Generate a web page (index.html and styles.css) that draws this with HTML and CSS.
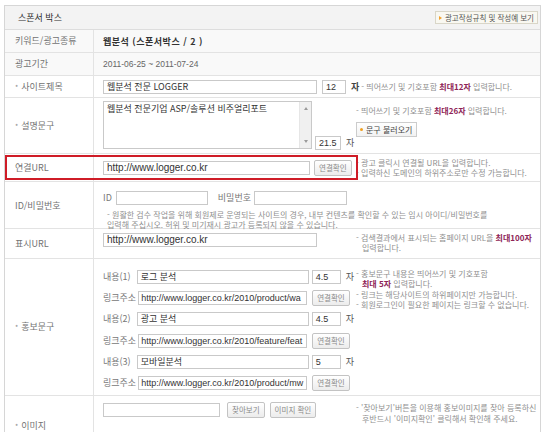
FILE: index.html
```html
<!DOCTYPE html>
<html lang="ko">
<head>
<meta charset="utf-8">
<title>스폰서 박스</title>
<link rel="stylesheet" href="styles.css">
</head>
<body>
<div class="box">
  <div class="head">
    <span class="title">스폰서 박스</span>
    <span class="rule-btn"><i class="tri"></i>광고작성규칙 및 작성예 보기</span>
  </div>

  <div class="row gray h23">
    <div class="lab">키워드/광고종류</div>
    <div class="val"><b class="kind">웹분석 (스폰서박스 / 2 )</b></div>
  </div>

  <div class="row gray h23">
    <div class="lab">광고기간</div>
    <div class="val"><span class="date">2011-06-25 ~ 2011-07-24</span></div>
  </div>

  <div class="row h22">
    <div class="lab"><i class="star">*</i>사이트제목</div>
    <div class="val">
      <span class="inp w214">웹분석 전문 LOGGER</span>
      <span class="inp num">12</span><span class="ja bold">자</span>
      <span class="desc inline">- 띄어쓰기 및 기호포함 <em>최대12자</em> 입력합니다.</span>
    </div>
  </div>

  <div class="row h56">
    <div class="lab"><i class="star">*</i>설명문구</div>
    <div class="val top pt3">
      <div class="fields">
        <div class="ta">
          <div class="ta-text">웹분석 전문기업 ASP/솔루션 비주얼리포트</div>
          <div class="sb"><i class="up"></i><i class="dn"></i></div>
        </div>
        <div class="cnt"><span class="inp num2">21.5</span><span class="ja">자</span></div>
      </div>
      <div class="dcol mt5">
        <p>- 띄어쓰기 및 기호포함 <em>최대26자</em> 입력합니다.</p>
        <span class="btn-load"><i class="dot"></i>문구 불러오기</span>
      </div>
    </div>
  </div>

  <div class="row h28 rel">
    <div class="lab">연결URL</div>
    <div class="val">
      <div class="fields">
        <span class="inp url w207">http://www.logger.co.kr</span>
        <span class="btn ml4">연결확인</span>
      </div>
      <div class="dcol">
        <p>- 광고 클릭시 연결될 URL을 입력합니다.</p>
        <p>- 입력하신 도메인의 하위주소로만 수정 가능합니다.</p>
      </div>
    </div>
    <div class="redbox"></div>
  </div>

  <div class="row h47">
    <div class="lab">ID/비밀번호</div>
    <div class="val col pt8">
      <div class="line">
        <span class="il">ID</span><span class="inp w92"></span>
        <span class="il pw">비밀번호</span><span class="inp w93"></span>
      </div>
      <p class="note">- 원활한 검수 작업을 위해 회원제로 운영되는 사이트의 경우, 내부 컨텐츠를 확인할 수 있는 임시 아이디/비밀번호를<br>입력해 주십시오. 허위 및 미기재시 광고가 등록되지 않을 수 있습니다.</p>
    </div>
  </div>

  <div class="row h30">
    <div class="lab">표시URL</div>
    <div class="val top pt4">
      <div class="fields">
        <span class="inp url w214">http://www.logger.co.kr</span>
      </div>
      <div class="dcol">
        <p>- 검색결과에서 표시되는 홈페이지 URL을 <em>최대100자</em></p>
        <p class="ind">입력합니다.</p>
      </div>
    </div>
  </div>

  <div class="row h137">
    <div class="lab"><i class="star">*</i>홍보문구</div>
    <div class="val top pt10">
      <div class="fields stack">
        <div class="line"><span class="il c">내용(1)</span><span class="inp w172">로그 분석</span><span class="inp num3">4.5</span><span class="ja">자</span></div>
        <div class="line"><span class="il l">링크주소</span><span class="inp link w169">http://www.logger.co.kr/2010/product/wa</span><span class="btn ml5">연결확인</span></div>
        <div class="line"><span class="il c">내용(2)</span><span class="inp w172">광고 분석</span><span class="inp num3">4.5</span><span class="ja">자</span></div>
        <div class="line"><span class="il l">링크주소</span><span class="inp link w169">http://www.logger.co.kr/2010/feature/feat</span><span class="btn ml5">연결확인</span></div>
        <div class="line"><span class="il c">내용(3)</span><span class="inp w172">모바일분석</span><span class="inp num3">5</span><span class="ja">자</span></div>
        <div class="line"><span class="il l">링크주소</span><span class="inp link w169">http://www.logger.co.kr/2010/product/mw</span><span class="btn ml5">연결확인</span></div>
      </div>
      <div class="dcol promo">
        <p>- 홍보문구 내용은 띄어쓰기 및 기호포함</p>
        <p class="ind"><em>최대 5자</em> 입력합니다.</p>
        <p>- 링크는 해당사이트의 하위페이지만 가능합니다.</p>
        <p>- 회원로그인이 필요한 페이지는 링크할 수 없습니다.</p>
      </div>
    </div>
  </div>

  <div class="row h60">
    <div class="lab"><i class="star">*</i>이미지</div>
    <div class="val top pt6">
      <div class="fields">
        <span class="inp w117"></span>
        <span class="btn ml7">찾아보기</span>
        <span class="btn ml5">이미지 확인</span>
      </div>
      <div class="dcol img">
        <p>- '찾아보기'버튼을 이용해 홍보이미지를 찾아 등록하신</p>
        <p class="ind">후반드시 '이미지확인' 클릭해서 확인해 주세요.</p>
      </div>
    </div>
  </div>
</div>
</body>
</html>
```

FILE: styles.css
```css
* { box-sizing: border-box; }
html, body { margin: 0; padding: 0; background: #fff; }
body {
  font-family: "Noto Sans CJK KR", "Noto Sans", sans-serif;
  font-size: 9px;
  color: #6f6f6f;
  overflow: hidden;
}
p { margin: 0; }
em { font-style: normal; font-weight: bold; color: #8e2456; }
i { font-style: normal; }

.box {
  width: 537px;
  margin: 5px 0 0 4px;
  border: 1px solid #d6d6d6;
  border-bottom: none;
}

.head {
  height: 24px;
  background: #f3f3f3;
  border-bottom: 1px solid #dddddd;
  display: flex;
  align-items: center;
  justify-content: space-between;
  padding: 0 2px 0 13px;
}
.title { color: #2e2e2e; font-size: 9px; line-height: 12px; }
.rule-btn {
  height: 13px;
  display: flex;
  align-items: center;
  padding: 0 3px 0 3px;
  border: 1px solid #d9d6c8;
  background: #f9f8f1;
  color: #555;
  font-size: 7.5px;
  line-height: 11px;
}
.tri {
  width: 0; height: 0;
  border-left: 3px solid #f2a12c;
  border-top: 2px solid transparent;
  border-bottom: 2px solid transparent;
  margin-right: 3px;
}

.row {
  display: grid;
  grid-template-columns: 89px 1fr;
  border-bottom: 1px solid #e3e3e3;
}
.row.gray { background: #f9f9f9; }
.row.rel { position: relative; }
.h22 { height: 22px; }
.h23 { height: 23px; }
.h28 { height: 28px; }
.h30 { height: 30px; }
.h47 { height: 47px; }
.h56 { height: 56px; }
.h60 { height: 60px; }
.h137 { height: 137px; }

.lab {
  border-right: 1px solid #e3e3e3;
  display: flex;
  align-items: center;
  padding-left: 10px;
  color: #727272;
  font-size: 9px;
  line-height: 12px;
  white-space: nowrap;
}
.star { font-size: 7px; color: #8a8a8a; margin-right: 3px; }

.val {
  padding-left: 9px;
  display: flex;
  align-items: center;
  min-width: 0;
}
.val.top { align-items: flex-start; }
.val.col { flex-direction: column; align-items: flex-start; }
.pt3 { padding-top: 3px; }
.pt4 { padding-top: 4px; }
.pt6 { padding-top: 6px; }
.pt8 { padding-top: 8px; }
.pt10 { padding-top: 10px; }

.kind { color: #333; font-size: 9px; letter-spacing: 0.5px; }
.date { font-family: "Liberation Sans", Arial, sans-serif; font-size: 8.5px; color: #666; }

.inp {
  display: inline-block;
  height: 14px;
  border: 1px solid #c9c9c9;
  background: #fff;
  padding: 0 3px;
  color: #333;
  font-size: 9px;
  line-height: 12px;
  white-space: nowrap;
  overflow: hidden;
  flex: none;
}
.inp.url { font-family: "Liberation Sans", Arial, sans-serif; font-size: 10px; }
.inp.link { font-family: "Liberation Sans", Arial, sans-serif; font-size: 9px; padding: 0 2px; }
.w92 { width: 92px; }
.w93 { width: 93px; }
.w117 { width: 117px; }
.w169 { width: 169px; }
.w172 { width: 172px; }
.w207 { width: 207px; }
.w214 { width: 214px; }
.num { width: 24px; margin-left: 5px; font-family: "Liberation Sans", Arial, sans-serif; }
.num2 { width: 26px; margin-left: 3px; font-family: "Liberation Sans", Arial, sans-serif; }
.num3 { width: 29px; margin-left: 3px; font-family: "Liberation Sans", Arial, sans-serif; }
.ja { margin-left: 5px; color: #555; font-size: 9px; line-height: 12px; }
.ja.bold { font-weight: bold; color: #444; }

.desc, .dcol, .note {
  font-size: 8px;
  color: #8f8f8f;
  white-space: nowrap;
}
.desc.inline { margin-left: 2px; line-height: 10px; }

.fields { width: 253px; flex: none; display: flex; align-items: center; }
.fields.stack { flex-direction: column; align-items: flex-start; gap: 6.4px; }
.dcol { line-height: 10px; }
.dcol.mt5 { margin-top: 5px; }
.dcol.promo { margin-top: 0; line-height: 10.4px; }
.dcol.img { margin-top: 0; line-height: 11px; }
.dcol .ind { padding-left: 6px; }

.ta {
  width: 209px;
  height: 48px;
  border: 1px solid #c9c9c9;
  background: #fff;
  display: flex;
  flex: none;
}
.ta-text {
  flex: 1;
  padding: 1px 3px;
  color: #333;
  font-size: 9px;
  line-height: 12px;
  white-space: nowrap;
  overflow: hidden;
}
.sb {
  width: 12px;
  background: #f0f0f0;
  border-left: 1px solid #e6e6e6;
  display: flex;
  flex-direction: column;
  justify-content: space-between;
  align-items: center;
  padding: 5px 0;
}
.up, .dn { width: 0; height: 0; border-left: 2.5px solid transparent; border-right: 2.5px solid transparent; }
.up { border-bottom: 3px solid #9a9a9a; }
.dn { border-top: 3px solid #9a9a9a; }
.cnt { align-self: flex-end; display: flex; align-items: center; margin-bottom: -1px; }

.btn {
  display: inline-flex;
  align-items: center;
  justify-content: center;
  height: 16px;
  padding: 0 4px;
  border: 1px solid #c3c3c3;
  border-radius: 2px;
  background: linear-gradient(#ffffff, #ececec);
  color: #8a8a8a;
  font-size: 7.5px;
  line-height: 10px;
  white-space: nowrap;
  flex: none;
}
.btn.ml4 { margin-left: 4px; }
.btn.ml5 { margin-left: 5px; }
.btn.ml7 { margin-left: 7px; }

.btn-load {
  display: inline-flex;
  align-items: center;
  margin-top: 6px;
  height: 15px;
  padding: 0 4px 0 3px;
  border: 1px solid #cccccc;
  background: linear-gradient(#ffffff, #f2f2f2);
  color: #444;
  font-size: 8px;
  line-height: 10px;
}
.dot { width: 3px; height: 3px; border-radius: 50%; background: #f0a020; margin-right: 3px; }

.line { display: flex; align-items: center; height: 15px; }
.il { color: #777; font-size: 9px; line-height: 12px; margin-right: 4px; white-space: nowrap; }
.il.pw { margin-left: 10px; margin-right: 3px; }
.il.c { margin-right: 6px; }
.il.l { margin-right: 2px; }

.note {
  margin-top: 5px;
  line-height: 9.5px;
  padding-left: 4px;
}

.redbox {
  position: absolute;
  left: 0;
  top: 1px;
  width: 353px;
  height: 25px;
  border: 2px solid #cf1c27;
  pointer-events: none;
}
```
